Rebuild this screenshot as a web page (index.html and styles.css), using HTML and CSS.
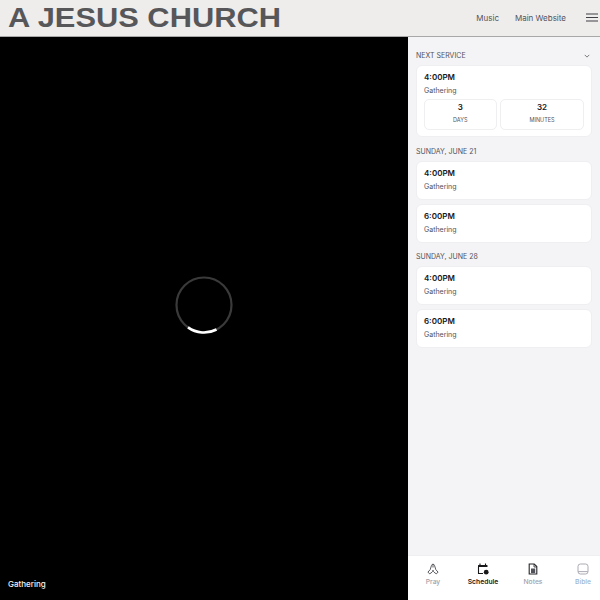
FILE: index.html
```html
<!DOCTYPE html>
<html lang="en">
<head>
<meta charset="utf-8">
<title>A Jesus Church</title>
<link rel="stylesheet" href="styles.css">
</head>
<body>
<header class="topbar">
  <div class="logo">A JESUS CHURCH</div>
  <nav class="topnav">
    <a class="toplink">Music</a>
    <a class="toplink">Main Website</a>
    <svg class="burger" viewBox="0 0 12 10" width="12" height="10"><path d="M0 1h12M0 4.5h12M0 8h12" stroke="#3f3f46" stroke-width="1.1" fill="none"/></svg>
  </nav>
</header>
<main class="main">
  <section class="video">
    <svg class="spinner" viewBox="0 0 60 60" width="60" height="60">
      <circle cx="30" cy="30" r="27.500" fill="none" stroke="#3a3a3a" stroke-width="2.200"/>
      <path d="M14 52.400A27.500 27.500 0 0 0 42.500 54.500" fill="none" stroke="#fff" stroke-width="2.600"/>
    </svg>
    <div class="caption">Gathering</div>
  </section>
  <aside class="side">
    <div class="list">
      <div class="group first">
        <div class="grouphead"><span>NEXT SERVICE</span>
          <svg class="chev" viewBox="0 0 8 5" width="6" height="4"><path d="M1 1l3 3 3-3" stroke="#52525b" stroke-width="1" fill="none"/></svg>
        </div>
        <div class="card">
          <div class="time">4:00PM</div>
          <div class="name">Gathering</div>
          <div class="count">
            <div class="cell days"><b>3</b><span>DAYS</span></div>
            <div class="cell mins"><b>32</b><span>MINUTES</span></div>
          </div>
        </div>
      </div>
      <div class="group">
        <div class="grouphead"><span>SUNDAY, JUNE 21</span></div>
        <div class="card"><div class="time">4:00PM</div><div class="name">Gathering</div></div>
        <div class="card"><div class="time">6:00PM</div><div class="name">Gathering</div></div>
      </div>
      <div class="group">
        <div class="grouphead"><span>SUNDAY, JUNE 28</span></div>
        <div class="card"><div class="time">4:00PM</div><div class="name">Gathering</div></div>
        <div class="card"><div class="time">6:00PM</div><div class="name">Gathering</div></div>
      </div>
    </div>
    <nav class="tabs">
      <div class="tab">
        <svg viewBox="0 0 12 12" width="12" height="12"><path d="M6 4.500V1.600M6 1.200c-.9 0-1.300.5-1.500 1.200L3.200 6.600.9 9.200l1.900 1.600L5 9.200c.7-.5 1-1.100 1-2 0 .9.3 1.500 1 2l2.200 1.600 1.900-1.600-2.300-2.600-1.300-4.200C7.300 1.700 6.900 1.200 6 1.200Z" fill="none" stroke="#3f3f46" stroke-width=".85"/></svg>
        <span>Pray</span>
      </div>
      <div class="tab active">
        <svg viewBox="0 0 12 12" width="12" height="12"><path d="M3 .5v2M8.500 .5v2" stroke="#18181b" stroke-width="1.100"/><path d="M1.500 2h8.500a.5.5 0 0 1 .5.5V4H1V2.500a.5.5 0 0 1 .5-.5Z" fill="#18181b"/><path d="M1.500 4v6.500h4.500" fill="none" stroke="#18181b" stroke-width="1.100"/><circle cx="9.200" cy="9.200" r="2.400" fill="#18181b"/></svg>
        <span>Schedule</span>
      </div>
      <div class="tab">
        <svg viewBox="0 0 12 12" width="12" height="12"><path d="M2.200 1h5l2.600 2.600V11H2.200Z" fill="none" stroke="#27272a" stroke-width="1.100"/><path d="M4 5.500h4.200V10H4Z" fill="#52525b"/><path d="M7 1v3h2.800" fill="none" stroke="#27272a" stroke-width=".8"/></svg>
        <span>Notes</span>
      </div>
      <div class="tab bible">
        <svg viewBox="0 0 12 12" width="12" height="12"><rect x="1" y="1" width="10" height="10" rx="2.400" fill="none" stroke="#a1a1aa" stroke-width=".9"/><path d="M1.200 8.600h9.600" stroke="#a1a1aa" stroke-width=".9"/></svg>
        <span>Bible</span>
      </div>
    </nav>
  </aside>
</main>
</body>
</html>
```
FILE: styles.css
```css
* { box-sizing: border-box; }
html, body { margin: 0; height: 100%; }
body {
  width: 600px;
  height: 600px;
  overflow: hidden;
  display: flex;
  flex-direction: column;
  font-family: Inter, "Liberation Sans", sans-serif;
  background: #000;
}
.topbar {
  height: 37px;
  flex: none;
  display: flex;
  align-items: center;
  justify-content: space-between;
  padding: 0 2px 0 8px;
  background: #eeedeb;
  border-bottom: 1px solid #a8a8a8;
}
.logo {
  font-family: "Liberation Sans", Arial, sans-serif;
  font-weight: 700;
  font-size: 27px;
  line-height: 33px;
  color: #57575a;
  transform: scaleX(1.142);
  transform-origin: left center;
  white-space: nowrap;
}
.topnav { display: flex; align-items: center; }
.toplink { font-size: 8px; color: #52525b; margin-right: 16px; }
.toplink + .toplink { margin-right: 20px; }
.burger { display: block; }
.main { flex: 1; display: flex; min-height: 0; }
.video { flex: 1; position: relative; background: #000; }
.spinner {
  position: absolute;
  left: 174px;
  top: 238px;
  display: block;
}
.caption {
  position: absolute;
  left: 8px;
  bottom: 10px;
  font-size: 8px;
  line-height: 12px;
  font-weight: 500;
  color: #f4f4f5;
}
.side {
  width: 192px;
  flex: none;
  display: flex;
  flex-direction: column;
  background: #f4f4f6;
}
.list { flex: 1; padding: 0 8px; min-height: 0; }
.group { margin-top: 8px; }
.group.first { margin-top: 13px; margin-bottom: 9px; }
.grouphead {
  display: flex;
  align-items: center;
  justify-content: space-between;
  height: 11px;
  padding: 1px 2px 0 0;
  font-size: 7px;
  line-height: 10px;
  color: #52525b;
}
.chev { display: block; }
.card {
  background: #fff;
  border: 1px solid #efeff2;
  border-radius: 6px;
  padding: 6px 7px;
  height: 39px;
  margin-top: 4px;
}
.first .card { height: 72px; }
.time { font-size: 8px; line-height: 11px; font-weight: 600; color: #18181b; }
.name { font-size: 7px; line-height: 10px; margin-top: 3px; color: #52525b; }
.count { display: flex; gap: 3.500px; margin-top: 3px; }
.cell {
  height: 31px;
  border: 1px solid #efeff2;
  border-radius: 5px;
  display: flex;
  flex-direction: column;
  align-items: center;
  padding-top: 2px;
}
.days { width: 72.500px; }
.mins { width: 84px; }
.cell b { font-size: 8px; line-height: 11px; font-weight: 600; color: #18181b; }
.cell span { font-size: 5.500px; line-height: 8px; margin-top: 3px; color: #52525b; }
.tabs {
  height: 45px;
  flex: none;
  background: #fff;
  border-top: 1px solid #efeff2;
  display: grid;
  grid-template-columns: repeat(4, 50px);
  padding: 7px 0 0 0;
}
.tab {
  display: flex;
  flex-direction: column;
  align-items: center;
  font-size: 6.750px;
  line-height: 9px;
  color: #a1a1aa;
  font-weight: 500;
}
.tab svg { display: block; margin-bottom: 2px; }
.tab.active { color: #18181b; font-weight: 600; }
.tab.bible { color: #9db4d0; }
```
